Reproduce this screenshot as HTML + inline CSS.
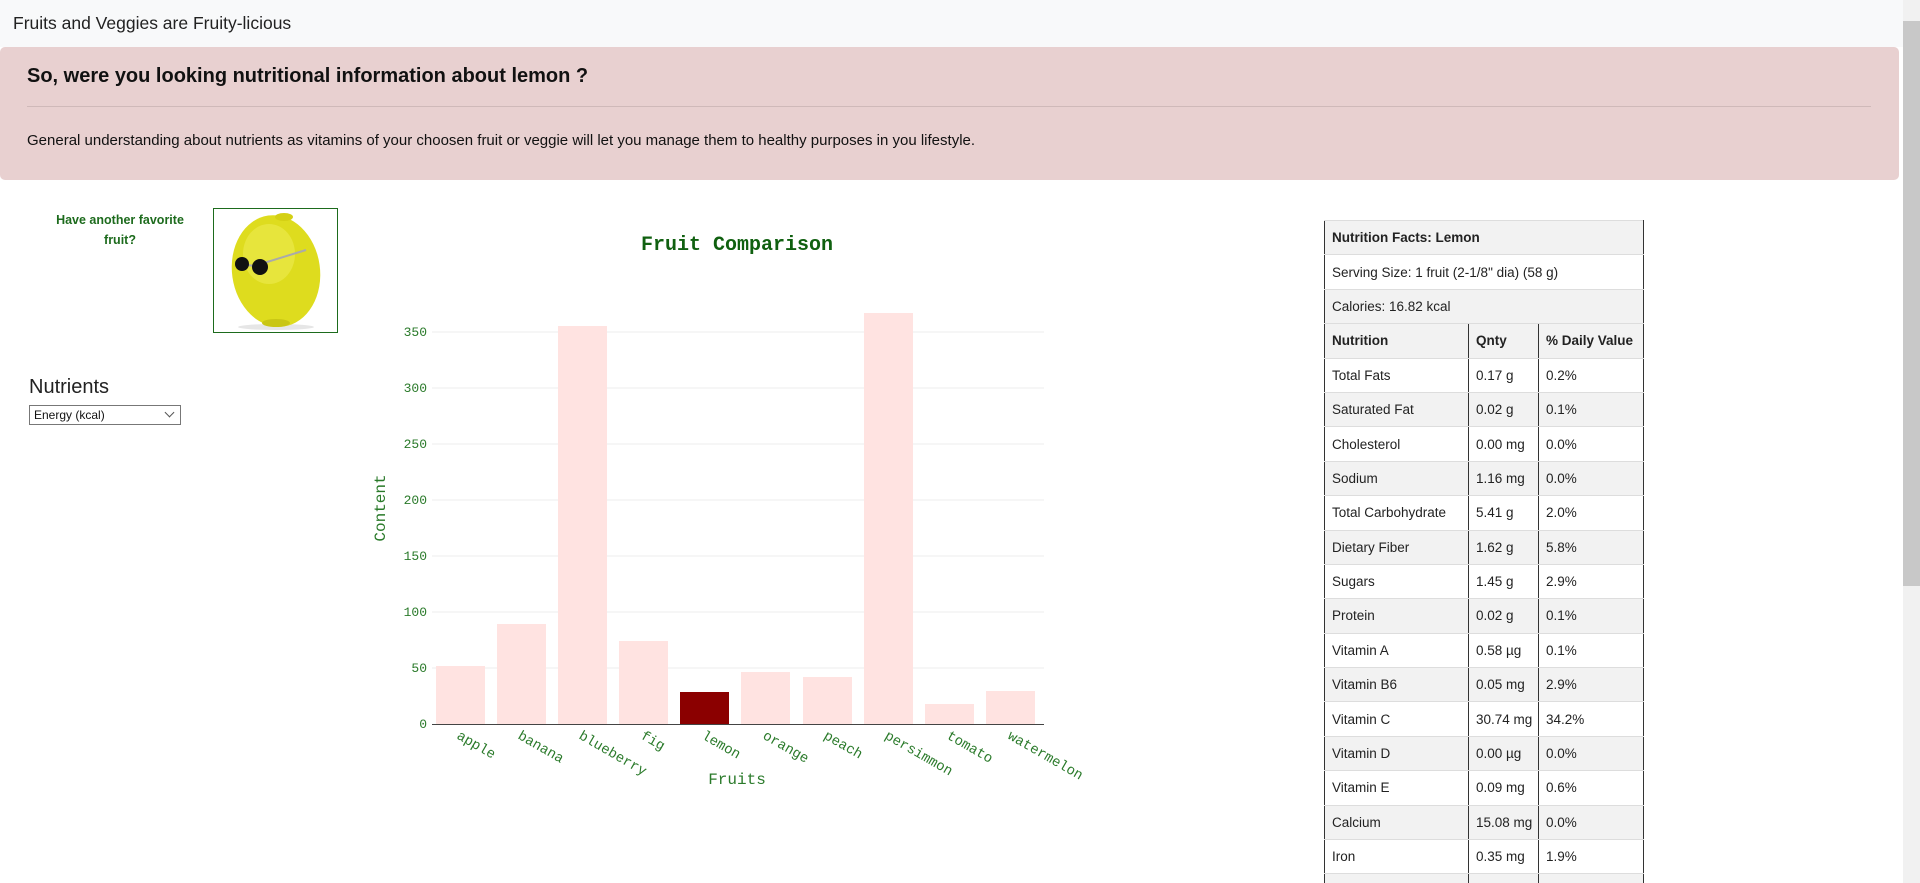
<!DOCTYPE html>
<html style="overflow:hidden;height:883px"><head><meta charset="utf-8"><style>
body{margin:0;width:1920px;height:883px;overflow:hidden;font-family:"Liberation Sans",sans-serif;background:#fff;position:relative}
.nav{position:absolute;left:0;top:0;width:1903px;height:47px;background:#f8f9fa}
.nav span{position:absolute;left:13px;top:13px;font-size:17.5px;color:#222}
.jumbo{position:absolute;left:0;top:47px;width:1899px;height:133px;background:#e8d0d0;border-radius:5px}
.jumbo h1{position:absolute;left:27px;top:18px;margin:0;font-size:20px;font-weight:bold;color:#111}
.jumbo hr{position:absolute;left:27px;top:59px;width:1844px;margin:0;border:0;border-top:1px solid #cfb9b9}
.jumbo p{position:absolute;left:27px;top:85px;margin:0;font-size:15px;color:#111}
.fav{position:absolute;left:40px;top:210px;width:160px;text-align:center;color:#1d6b1d;font-weight:bold;font-size:12.5px;line-height:20px}
.img{position:absolute;left:213px;top:208px;width:123px;height:123px;border:1px solid #1d6b1d;background:#fff}
.nut{position:absolute;left:29px;top:376px;font-size:20px;color:#222}
.sel{position:absolute;left:29px;top:405px;width:152px;height:20px;border:1px solid #777;font-size:12px;line-height:19px;box-sizing:border-box;padding-left:4px;color:#111}
.sel i{position:absolute;right:7px;top:3px;width:6px;height:6px;border-right:1px solid #555;border-bottom:1px solid #555;transform:rotate(45deg)}
.tw{position:absolute;left:1324px;top:220px;width:330px;height:663px;overflow:hidden}
table{border-collapse:collapse;font-size:13.5px;color:#222}
td{height:34.4px;padding:0 0 0 7px;border-bottom:1px solid #ddd;border-left:1px solid #333;border-right:1px solid #333;box-sizing:border-box}
tr.g td{background:#f2f2f2}
tr:first-child td{border-top:1px solid #ddd}
.b{font-weight:bold}
.sb{position:absolute;left:1903px;top:0;width:17px;height:883px;background:#f1f1f1}
.th{position:absolute;left:1903px;top:21px;width:17px;height:565px;background:#c8c8c8}
</style></head><body>
<div class="nav"><span>Fruits and Veggies are Fruity-licious</span></div>
<div class="jumbo"><h1>So, were you looking nutritional information about lemon ?</h1><hr><p>General understanding about nutrients as vitamins of your choosen fruit or veggie will let you manage them to healthy purposes in you lifestyle.</p></div>
<div class="fav">Have another favorite<br>fruit?</div>
<div class="img"><svg width="123" height="123" viewBox="0 0 123 123">
<ellipse cx="62" cy="118" rx="38" ry="3" fill="#e6e6e6"/>
<ellipse cx="62" cy="62" rx="44" ry="56" fill="#dedc1e" transform="rotate(-8 62 62)"/>
<ellipse cx="55" cy="45" rx="26" ry="30" fill="#eceb50" opacity=".6"/>
<ellipse cx="70" cy="8" rx="9" ry="4" fill="#d4d014"/>
<ellipse cx="62" cy="114" rx="14" ry="4" fill="#c9c614"/>
<line x1="40" y1="57" x2="92" y2="41" stroke="#aaa" stroke-width="2"/>
<line x1="28" y1="55" x2="40" y2="57" stroke="#aaa" stroke-width="2"/>
<circle cx="28" cy="55" r="7" fill="#111"/><circle cx="46" cy="58" r="8" fill="#111"/>
</svg></div>
<div class="nut">Nutrients</div>
<div class="sel">Energy (kcal)<i></i></div>
<svg style="position:absolute;left:0;top:0" width="1100" height="883">
<g font-family="Liberation Mono,monospace" fill="#2a7a2a">
<text x="737" y="250" text-anchor="middle" font-size="20" font-weight="bold" fill="#106010">Fruit Comparison</text>
<g stroke="#eee" stroke-width="1">
<line x1="432" x2="1044" y1="668" y2="668"/><line x1="432" x2="1044" y1="612" y2="612"/><line x1="432" x2="1044" y1="556" y2="556"/><line x1="432" x2="1044" y1="500" y2="500"/><line x1="432" x2="1044" y1="444" y2="444"/><line x1="432" x2="1044" y1="388" y2="388"/><line x1="432" x2="1044" y1="332" y2="332"/></g>
<g font-size="13" text-anchor="end">
<text x="427" y="728">0</text><text x="427" y="672">50</text><text x="427" y="616">100</text><text x="427" y="560">150</text><text x="427" y="504">200</text><text x="427" y="448">250</text><text x="427" y="392">300</text><text x="427" y="336">350</text></g>
<g fill="#ffe3e1">
<rect x="436" y="666" width="49" height="58"/>
<rect x="497" y="624" width="49" height="100"/>
<rect x="558" y="326" width="49" height="398"/>
<rect x="619" y="641" width="49" height="83"/>
<rect x="680" y="692" width="49" height="32" fill="#8b0000"/>
<rect x="741" y="672" width="49" height="52"/>
<rect x="803" y="677" width="49" height="47"/>
<rect x="864" y="313" width="49" height="411"/>
<rect x="925" y="704" width="49" height="20"/>
<rect x="986" y="691" width="49" height="33"/></g>
<line x1="432" x2="1044" y1="724.5" y2="724.5" stroke="#444"/>
<g font-size="14">
<text transform="translate(456,738) rotate(30)">apple</text>
<text transform="translate(517,738) rotate(30)">banana</text>
<text transform="translate(578,738) rotate(30)">blueberry</text>
<text transform="translate(640,738) rotate(30)">fig</text>
<text transform="translate(701,738) rotate(30)">lemon</text>
<text transform="translate(762,738) rotate(30)">orange</text>
<text transform="translate(823,738) rotate(30)">peach</text>
<text transform="translate(884,738) rotate(30)">persimmon</text>
<text transform="translate(946,738) rotate(30)">tomato</text>
<text transform="translate(1007,738) rotate(30)">watermelon</text></g>
<text x="737" y="784" text-anchor="middle" font-size="16">Fruits</text>
<text transform="translate(385,508) rotate(-90)" text-anchor="middle" font-size="16">Content</text>
</g></svg>
<div class="tw"><table>
<tr class="g"><td colspan="3" class="b" style="width:319px">Nutrition Facts: Lemon</td></tr>
<tr><td colspan="3">Serving Size: 1 fruit (2-1/8" dia) (58 g)</td></tr>
<tr class="g"><td colspan="3">Calories: 16.82 kcal</td></tr>
<tr class="g"><td class="b" style="width:144px">Nutrition</td><td class="b" style="width:70px">Qnty</td><td class="b" style="width:105px">% Daily Value</td></tr>
<tr><td>Total Fats</td><td>0.17 g</td><td>0.2%</td></tr>
<tr class="g"><td>Saturated Fat</td><td>0.02 g</td><td>0.1%</td></tr>
<tr><td>Cholesterol</td><td>0.00 mg</td><td>0.0%</td></tr>
<tr class="g"><td>Sodium</td><td>1.16 mg</td><td>0.0%</td></tr>
<tr><td>Total Carbohydrate</td><td>5.41 g</td><td>2.0%</td></tr>
<tr class="g"><td>Dietary Fiber</td><td>1.62 g</td><td>5.8%</td></tr>
<tr><td>Sugars</td><td>1.45 g</td><td>2.9%</td></tr>
<tr class="g"><td>Protein</td><td>0.02 g</td><td>0.1%</td></tr>
<tr><td>Vitamin A</td><td>0.58 µg</td><td>0.1%</td></tr>
<tr class="g"><td>Vitamin B6</td><td>0.05 mg</td><td>2.9%</td></tr>
<tr><td>Vitamin C</td><td>30.74 mg</td><td>34.2%</td></tr>
<tr class="g"><td>Vitamin D</td><td>0.00 µg</td><td>0.0%</td></tr>
<tr><td>Vitamin E</td><td>0.09 mg</td><td>0.6%</td></tr>
<tr class="g"><td>Calcium</td><td>15.08 mg</td><td>0.0%</td></tr>
<tr><td>Iron</td><td>0.35 mg</td><td>1.9%</td></tr>
<tr class="g"><td>Potassium</td><td>80.04 mg</td><td>1.7%</td></tr>
</table></div>
<div class="sb"></div><div class="th"></div>
</body></html>
